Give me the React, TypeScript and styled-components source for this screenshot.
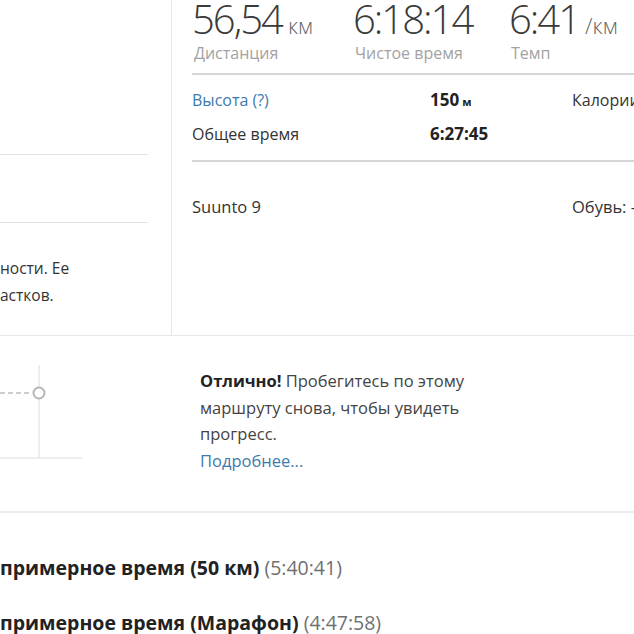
import React from "react";
import styled, { createGlobalStyle } from "styled-components";

const GlobalStyle = createGlobalStyle`
  html, body {
    margin: 0;
    padding: 0;
    background: #fff;
  }
  body {
    font-family: "Open Sans", "Noto Sans", "DejaVu Sans", sans-serif;
    color: #333;
    overflow: hidden;
  }
`;

const Page = styled.div`
  width: 634px;
  height: 634px;
  overflow: hidden;
`;

const Summary = styled.section`
  display: grid;
  grid-template-columns: 172px 1fr;
  height: 335px;
  border-bottom: 1px solid #e8e8e8;
`;

const MapColumn = styled.div`
  border-right: 1px solid #e6e6e6;
  position: relative;
`;

const Rule = styled.div<{ top: number; width: number }>`
  position: absolute;
  left: 0;
  top: ${p => p.top}px;
  width: ${p => p.width}px;
  height: 1px;
  background: #e2e2e2;
`;

const Note = styled.p`
  position: absolute;
  left: 0;
  top: 255px;
  margin: 0;
  font-size: 15.5px;
  line-height: 27px;
  color: #333;
  white-space: nowrap;
`;

const StatsColumn = styled.div`
  padding-left: 20px;
  display: flex;
  flex-direction: column;
`;

const Headline = styled.div`
  display: flex;
  height: 75px;
  box-sizing: border-box;
  border-bottom: 2px solid #d6d6d6;
`;

const Stat = styled.div<{ width: number }>`
  width: ${p => p.width}px;
  display: flex;
  flex-direction: column;
`;

const Value = styled.div`
  font-size: 40px;
  font-weight: 300;
  line-height: 40px;
  height: 40px;
  margin-top: -1px;
  color: #3a3a3a;
  letter-spacing: -2px;
  white-space: nowrap;
`;

const Unit = styled.span`
  font-size: 22px;
  line-height: 20px;
  margin-left: 6px;
  color: #666;
  letter-spacing: 0;
`;

const Caption = styled.div`
  font-size: 16px;
  line-height: 22px;
  margin-top: 3px;
  color: #a2a2a2;
  margin-left: 2px;
  white-space: nowrap;
`;

const Details = styled.div`
  display: grid;
  grid-template-columns: 238px 142px 1fr;
  grid-auto-rows: 34px;
  padding-top: 8px;
  height: 87px;
  box-sizing: border-box;
  border-bottom: 2px solid #d6d6d6;
  font-size: 16px;
  line-height: 34px;
  white-space: nowrap;
`;

const Link = styled.a`
  color: #3e7aad;
  text-decoration: none;
`;

const Strong = styled.span`
  font-weight: 700;
  color: #222;
`;

const Figure = styled.span`
  font-weight: 700;
  font-size: 17px;
  color: #222;
`;

const Small = styled.span`
  font-size: 11px;
  font-weight: 700;
  margin-left: 3px;
`;

const Device = styled.div`
  display: grid;
  grid-template-columns: 380px 1fr;
  padding-top: 31px;
  font-size: 16.5px;
  line-height: 28px;
  white-space: nowrap;
`;

const Route = styled.section`
  display: flex;
  height: 177px;
  border-bottom: 2px solid #ececec;
  box-sizing: border-box;
`;

const Chart = styled.svg`
  width: 200px;
  height: 176px;
  flex: none;
`;

const RouteText = styled.p`
  margin: 32px 0 0;
  width: 300px;
  font-size: 16.5px;
  line-height: 26.5px;
  color: #444;
`;

const Predictions = styled.section`
  padding-top: 40px;
  display: flex;
  flex-direction: column;
  gap: 25px;
`;

const Prediction = styled.div`
  font-size: 19.5px;
  line-height: 30px;
  white-space: nowrap;
  color: #6f6f6f;
  b {
    color: #222;
  }
`;

export default function App() {
  return (
    <Page>
      <GlobalStyle />
      <Summary>
        <MapColumn>
          <Rule top={154} width={148} />
          <Rule top={222} width={148} />
          <Note>
            ности. Ее
            <br />
            астков.
          </Note>
        </MapColumn>
        <StatsColumn>
          <Headline>
            <Stat width={161}>
              <Value>
                56,54<Unit>км</Unit>
              </Value>
              <Caption>Дистанция</Caption>
            </Stat>
            <Stat width={156}>
              <Value>6:18:14</Value>
              <Caption>Чистое время</Caption>
            </Stat>
            <Stat width={130}>
              <Value>
                6:41<Unit>/км</Unit>
              </Value>
              <Caption>Темп</Caption>
            </Stat>
          </Headline>
          <Details>
            <Link href="#">Высота (?)</Link>
            <Figure>
              150<Small>м</Small>
            </Figure>
            <span>Калории</span>
            <span>Общее время</span>
            <Figure>6:27:45</Figure>
            <span />
          </Details>
          <Device>
            <span>Suunto 9</span>
            <span>Обувь: -</span>
          </Device>
        </StatsColumn>
      </Summary>
      <Route>
        <Chart viewBox="0 0 200 176">
          <line x1="0" y1="57" x2="31" y2="57" stroke="#bdbdbd" strokeWidth="1.5" strokeDasharray="5 3" />
          <line x1="39" y1="29" x2="39" y2="122" stroke="#dcdcdc" strokeWidth="1" />
          <line x1="0" y1="122" x2="82" y2="122" stroke="#dcdcdc" strokeWidth="1" />
          <circle cx="39" cy="57" r="5.5" fill="#fff" stroke="#b5b5b5" strokeWidth="2" />
        </Chart>
        <RouteText>
          <Strong>Отлично!</Strong> Пробегитесь по этому маршруту снова, чтобы увидеть прогресс.
          <br />
          <Link href="#">Подробнее...</Link>
        </RouteText>
      </Route>
      <Predictions>
        <Prediction>
          <b>примерное время (50 км)</b> (5:40:41)
        </Prediction>
        <Prediction>
          <b>примерное время (Марафон)</b> (4:47:58)
        </Prediction>
      </Predictions>
    </Page>
  );
}
